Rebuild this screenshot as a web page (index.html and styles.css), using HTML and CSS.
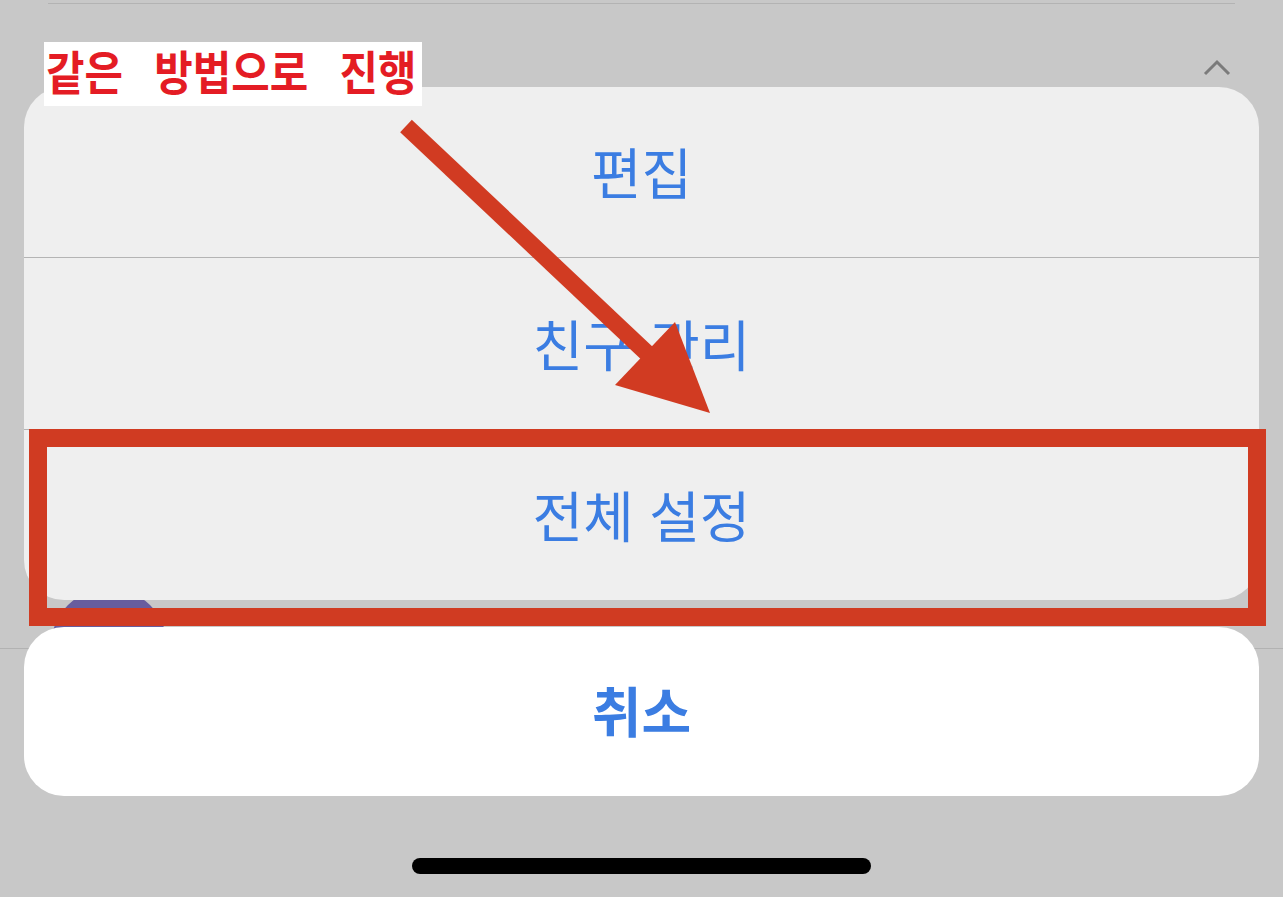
FILE: index.html
```html
<!DOCTYPE html>
<html lang="ko">
<head>
  <meta charset="UTF-8">
  <meta name="viewport" content="width=device-width, initial-scale=1.0">
  <title>전체 설정</title>
  <link rel="stylesheet" href="styles.css">
</head>
<body>
  <div class="screen">
    <!-- 뒤쪽 화면 -->
    <div class="bg-divider"></div>
    <div class="bg-header">
      <svg class="chevron" width="28" height="18" viewBox="0 0 28 18">
        <path d="M2 16 L14 4 L26 16" fill="none" stroke="#7b7b7b" stroke-width="3"/>
      </svg>
    </div>
    <div class="bg-avatar"></div>
    <div class="bg-line"></div>

    <!-- 액션 시트 -->
    <div class="sheet">
      <div class="sheet-group">
        <div class="sheet-row">편집</div>
        <div class="sheet-row">친구 관리</div>
        <div class="sheet-row">전체 설정</div>
      </div>
      <div class="sheet-cancel">취소</div>
      <div class="home-bar"></div>
    </div>

    <!-- 설명 표시 -->
    <div class="note"><span class="note-text">같은 방법으로 진행</span></div>
    <div class="highlight"></div>
    <svg class="arrow" width="1283" height="897" viewBox="0 0 1283 897">
      <line x1="406" y1="126" x2="668" y2="373" stroke="#d13b22" stroke-width="17"/>
      <polygon points="710,413 615,385 675,322" fill="#d13b22"/>
    </svg>
  </div>
</body>
</html>
```

FILE: styles.css
```css
/* 화면 기본 */
body {
  margin: 0;
  font-family: "Noto Sans CJK KR", "Noto Sans", sans-serif;
  background-color: #c8c8c8;
}

.screen {
  position: relative;
  width: 1283px;
  height: 897px;
  overflow: hidden;
  background-color: #c8c8c8;
}

.bg-divider {
  height: 1px;
  margin: 3px 48px 0;
  background-color: #b3b3b3;
}

.bg-header {
  display: flex;
  justify-content: flex-end;
  padding: 54px 52px 0 0;
}

.chevron {
  display: block;
}

.bg-avatar {
  width: 116px;
  height: 116px;
  margin: 512px 0 0 51px;
  border-radius: 50%;
  background-color: #675d9e;
}

.bg-line {
  height: 1px;
  margin-top: -56px;
  background-color: #b2b2b2;
}

.sheet {
  position: absolute;
  left: 24px;
  right: 24px;
  bottom: 23px;
  display: flex;
  flex-direction: column;
}

.sheet-group {
  background-color: #efefef;
  border-radius: 40px;
  overflow: hidden;
}

.sheet-row {
  height: 170px;
  display: flex;
  align-items: center;
  justify-content: center;
  padding-bottom: 4px;
  box-sizing: border-box;
  color: #3b7de2;
  font-size: 55px;
  border-top: 1px solid #b4b4b4;
}

.sheet-row:first-child {
  border-top: none;
}

.sheet-row:nth-child(2) {
  height: 172px;
}

.sheet-row:nth-child(3) {
  height: 171px;
}

.sheet-cancel {
  height: 169px;
  margin-top: 27px;
  display: flex;
  align-items: center;
  justify-content: center;
  padding-bottom: 4px;
  box-sizing: border-box;
  background-color: #fff;
  border-radius: 40px;
  color: #3b7de2;
  font-size: 54px;
  font-weight: bold;
}

.home-bar {
  width: 459px;
  height: 16px;
  margin: 62px auto 0;
  border-radius: 8px;
  background-color: #000;
}

.note {
  position: absolute;
  left: 44px;
  top: 42px;
  width: 378px;
  height: 64px;
  background-color: #fff;
  white-space: nowrap;
}

.note-text {
  display: inline-block;
  margin: -1px 0 0 2px;
  color: #e41c24;
  font-size: 47px;
  font-weight: bold;
  line-height: 58px;
  word-spacing: 22px;
  transform: scaleX(0.89);
  transform-origin: left center;
}

.highlight {
  position: absolute;
  left: 29px;
  top: 429px;
  width: 1237px;
  height: 197px;
  border: 18px solid #d03b22;
  box-sizing: border-box;
}

.arrow {
  position: absolute;
  left: 0;
  top: 0;
}
```
